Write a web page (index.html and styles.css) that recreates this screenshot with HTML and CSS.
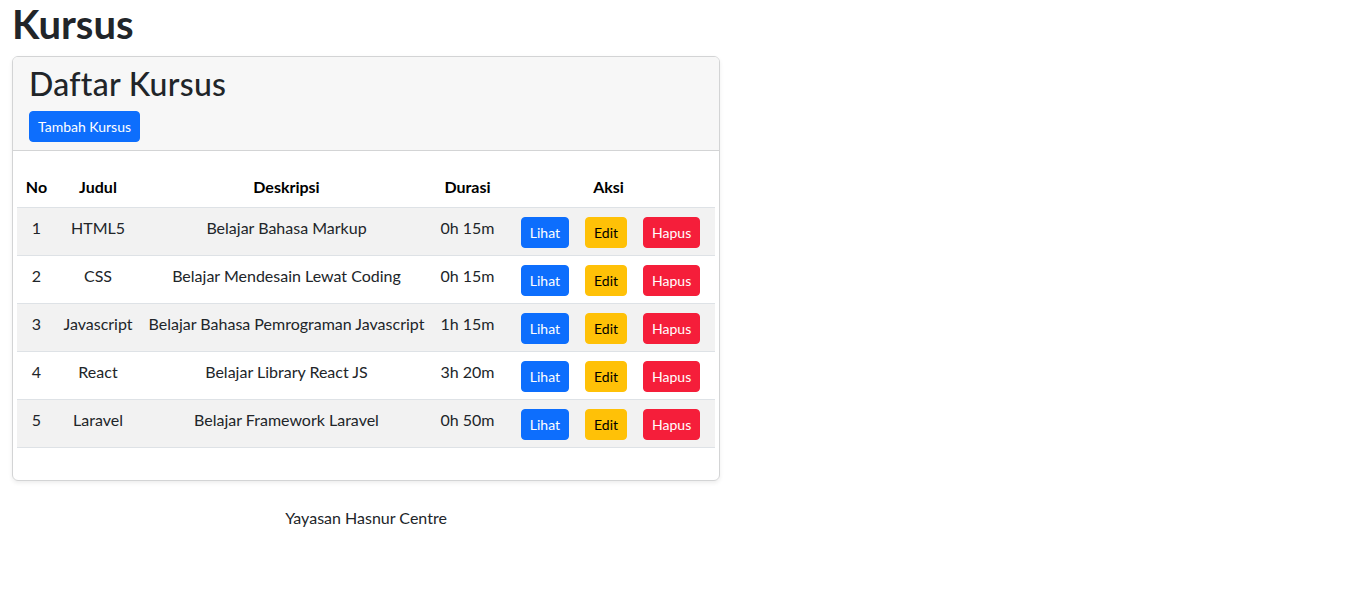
FILE: index.html
```html
<!DOCTYPE html>
<html lang="id">
<head>
<meta charset="utf-8">
<title>Kursus</title>
<link rel="stylesheet" href="styles.css">
</head>
<body>
<div class="container">
  <h1 class="page-title">Kursus</h1>
  <div class="card">
    <div class="card-header">
      <h2 class="card-title">Daftar Kursus</h2>
      <a class="btn btn-primary">Tambah Kursus</a>
    </div>
    <div class="card-body">
      <table class="table">
        <colgroup>
          <col class="c-no"><col class="c-judul"><col class="c-desk"><col class="c-dur"><col class="c-aksi">
        </colgroup>
        <thead>
          <tr><th>No</th><th>Judul</th><th>Deskripsi</th><th>Durasi</th><th>Aksi</th></tr>
        </thead>
        <tbody>
          <tr class="odd"><td>1</td><td>HTML5</td><td>Belajar Bahasa Markup</td><td>0h 15m</td><td><div class="actions"><a class="btn btn-primary">Lihat</a><a class="btn btn-warning">Edit</a><a class="btn btn-danger">Hapus</a></div></td></tr>
          <tr><td>2</td><td>CSS</td><td>Belajar Mendesain Lewat Coding</td><td>0h 15m</td><td><div class="actions"><a class="btn btn-primary">Lihat</a><a class="btn btn-warning">Edit</a><a class="btn btn-danger">Hapus</a></div></td></tr>
          <tr class="odd"><td>3</td><td>Javascript</td><td>Belajar Bahasa Pemrograman Javascript</td><td>1h 15m</td><td><div class="actions"><a class="btn btn-primary">Lihat</a><a class="btn btn-warning">Edit</a><a class="btn btn-danger">Hapus</a></div></td></tr>
          <tr><td>4</td><td>React</td><td>Belajar Library React JS</td><td>3h 20m</td><td><div class="actions"><a class="btn btn-primary">Lihat</a><a class="btn btn-warning">Edit</a><a class="btn btn-danger">Hapus</a></div></td></tr>
          <tr class="odd"><td>5</td><td>Laravel</td><td>Belajar Framework Laravel</td><td>0h 50m</td><td><div class="actions"><a class="btn btn-primary">Lihat</a><a class="btn btn-warning">Edit</a><a class="btn btn-danger">Hapus</a></div></td></tr>
        </tbody>
      </table>
    </div>
  </div>
  <footer class="footer">Yayasan Hasnur Centre</footer>
</div>
</body>
</html>
```
FILE: styles.css
```css
* { box-sizing: border-box; }
html, body { margin: 0; padding: 0; }
body {
  font-family: Lato, "Noto Sans", sans-serif;
  font-size: 16px;
  line-height: 1.5;
  color: #212529;
  background: #fff;
}
.container {
  width: 732px;
  padding: 0 12px;
}
.page-title {
  margin: 0 0 8px;
  font-size: 40px;
  line-height: 1.2;
  font-weight: 700;
}
.card {
  border: 1px solid #d3d4d5;
  border-radius: 6px;
  box-shadow: 0 2px 4px rgba(0,0,0,0.075);
  overflow: hidden;
}
.card-header {
  background: #f7f7f7;
  border-bottom: 1px solid #d3d4d5;
  padding: 8px 16px;
}
.card-title {
  margin: 0 0 8px;
  font-size: 32px;
  line-height: 1.2;
  font-weight: 500;
  letter-spacing: 0.3px;
}
.btn {
  display: inline-block;
  font-size: 14px;
  line-height: 21px;
  padding: 4px 8px;
  border: 1px solid transparent;
  border-radius: 4px;
  text-decoration: none;
  cursor: pointer;
}
.btn-primary { background: #0d6efd; border-color: #0d6efd; color: #fff; }
.btn-warning { background: #ffc107; border-color: #ffc107; color: #000; }
.btn-danger { background: #f51e3a; border-color: #f51e3a; color: #fff; }
.card-body {
  padding: 16px 4px;
}
.table {
  width: 100%;
  border-collapse: collapse;
  table-layout: fixed;
  margin-bottom: 16px;
  color: #000;
}
.c-no { width: 39px; }
.c-judul { width: 84px; }
.c-desk { width: 293px; }
.c-dur { width: 69px; }
.table th, .table td {
  padding: 8px 0;
  text-align: center;
  vertical-align: top;
  border-bottom: 1px solid #dee2e6;
  white-space: nowrap;
}
.table th { font-weight: 700; }
.table td { height: 48px; padding-bottom: 7px; color: #212529; }
.table tr.odd td { background: #f2f2f2; }
.actions {
  display: flex;
  justify-content: center;
  gap: 16px;
  padding-top: 1px;
  padding-left: 4px;
}
.footer {
  text-align: center;
  margin-top: 25px;
}
```
